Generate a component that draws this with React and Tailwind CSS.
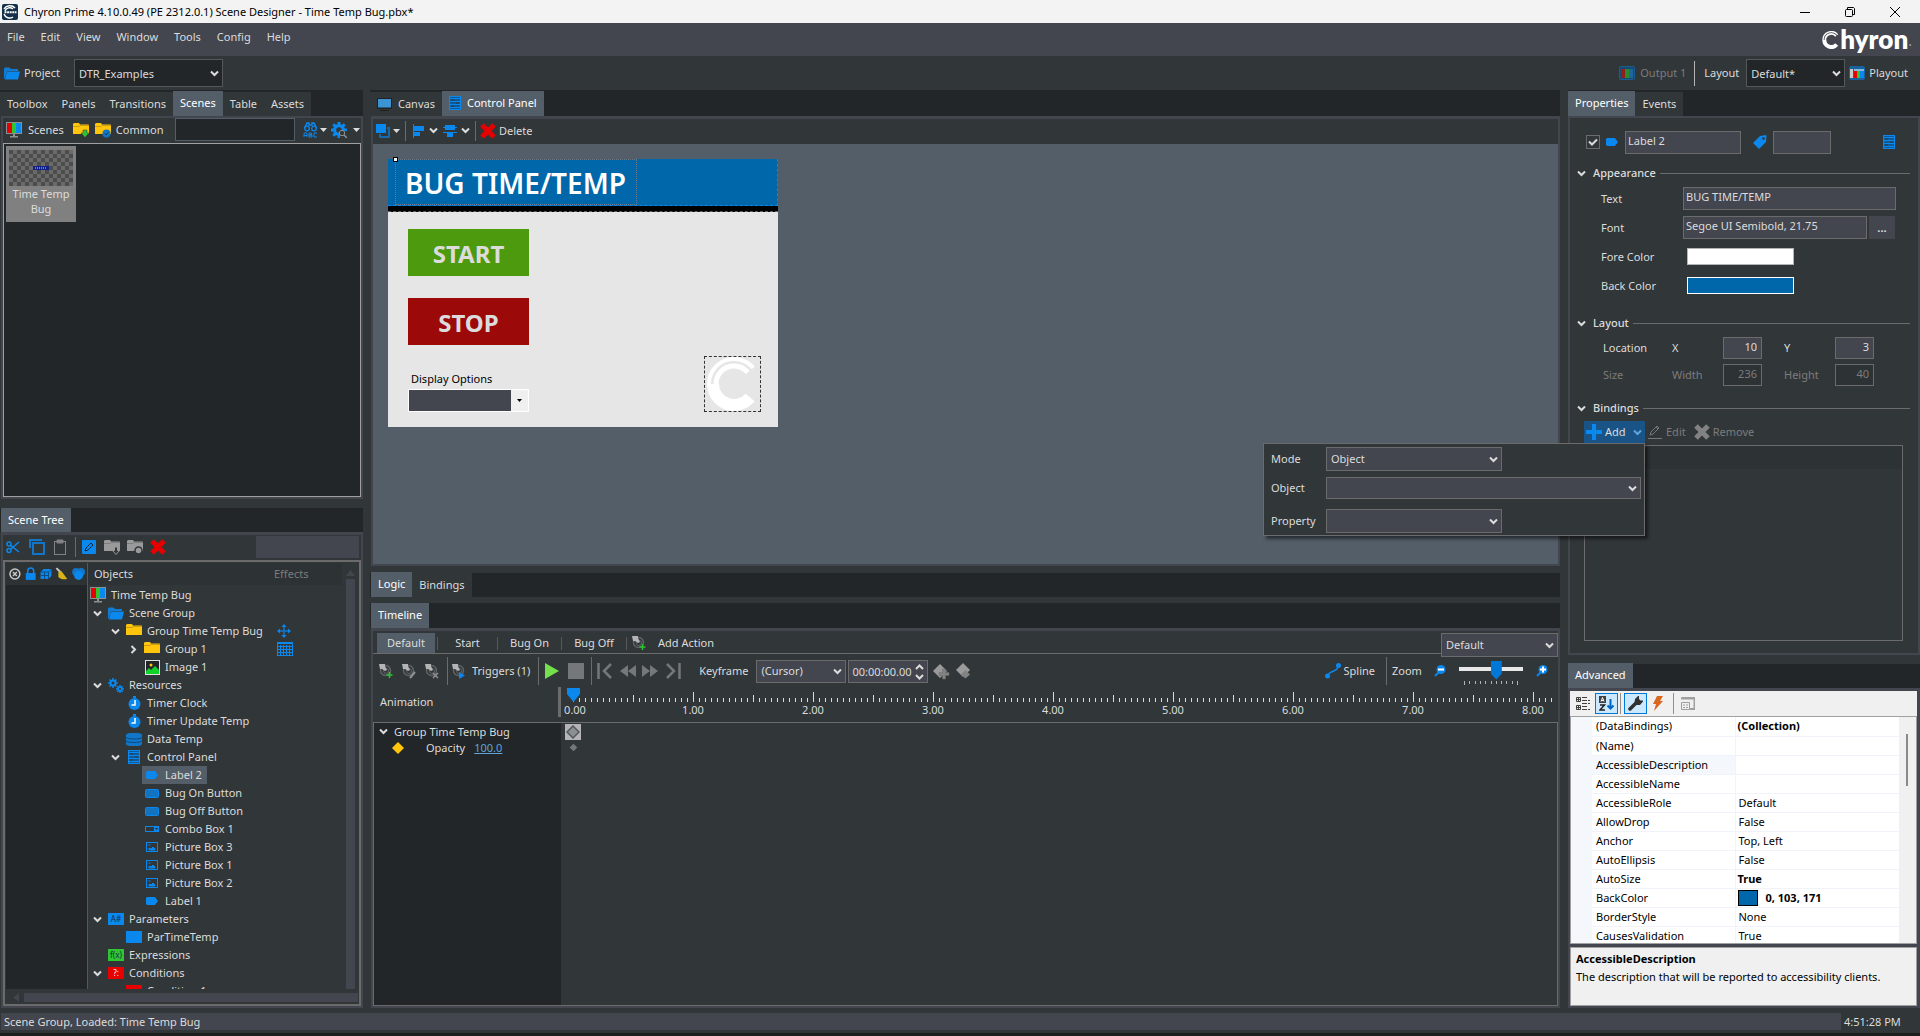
import { useState } from 'react';

const BLUE = '#0a88ee';

/* ---------- icons ---------- */

const Chevron = ({ color = '#dcdcdc', open = true }) => (
  <svg width="9" height="9" viewBox="0 0 9 9" fill="none" stroke={color} strokeWidth="2">
    <path d={open ? 'M1 2.5L4.5 6L8 2.5' : 'M2.5 1L6 4.5L2.5 8'} />
  </svg>
);

const Caret = () => (
  <svg width="7" height="4" viewBox="0 0 7 4"><path d="M0 0h7L3.5 4z" fill="#dcdcdc" /></svg>
);

const AppIcon = () => (
  <svg width="16" height="16" viewBox="0 0 16 16">
    <rect width="16" height="16" rx="2" fill="#12304a" />
    <path d="M2 5a7 7 0 0 1 11-1M3 7a5 5 0 0 1 8-2M2 10a6 6 0 0 0 9 3" fill="none" stroke="#fff" strokeWidth="1.5" />
    <path d="M2.5 8.3h12" stroke="#fff" strokeWidth="2" strokeDasharray="2 .6" />
  </svg>
);

const FolderOpenIcon = () => (
  <svg width="16" height="13" viewBox="0 0 16 13" fill={BLUE}>
    <path d="M0 1.500L1 .5h4.500L7 2h7v2H3L1 11.500H0z" opacity=".85" />
    <path d="M3 4.500h13L14 12.500H1z" />
  </svg>
);

const FolderIcon = ({ color = '#ffc40c', badge }) => (
  <svg width="16" height="16" viewBox="0 0 16 16">
    <path d="M0 2l1-1h5l1 1.500h8.500L16 3v9H0z" fill={color} />
    <path d="M0 4.500h6l1.500-1H16" stroke="#00000030" fill="none" />
    {badge === 'down' && <path d="M10 8h4v3h2l-4 4.500L8 11h2z" fill="#2fc52f" stroke="#313639" strokeWidth=".5" />}
    {badge === 'check' && (
      <>
        <circle cx="11.500" cy="11.500" r="4" fill="#1276c8" />
        <path d="M9.500 11.500l1.500 1.500 2.500-3" stroke="#0c3d66" fill="none" />
      </>
    )}
    {badge === 'arrow' && <path d="M10.500 8h3v3.500h2l-3.500 4-3.500-4h2z" fill="#313639" stroke="#9a9a9a" />}
    {badge === 'dot' && <circle cx="11.500" cy="11.500" r="3.500" fill="#9a9a9a" stroke="#313639" strokeWidth="1.500" />}
  </svg>
);

const MonitorIcon = () => (
  <svg width="16" height="16" viewBox="0 0 16 16">
    <path d="M0 0h16v12h-7v2h3v1.500H4V14h3v-2H0z" fill="#8d9092" />
    <path d="M1 1h5v10H1z" fill="#e60000" />
    <path d="M6 1h4v10H6z" fill="#2fc52f" />
    <path d="M10 1h5v10h-5z" fill={BLUE} />
  </svg>
);

const OutputIcon = () => (
  <svg width="16" height="14" viewBox="0 0 16 14">
    <rect x=".5" y=".5" width="15" height="13" rx="1" fill="#164a75" stroke="#1c5c8f" />
    <path d="M2 3h4v9H2z" fill="#8f1f1f" />
    <path d="M6 3h4v9H6z" fill="#2b8a2b" />
    <path d="M10 3h4v9h-4z" fill="#1f65a0" />
  </svg>
);

const PlayoutIcon = () => (
  <svg width="16" height="14" viewBox="0 0 16 14">
    <rect x=".5" y=".5" width="15" height="13" rx="1" fill="#17639f" stroke="#17639f" />
    <path d="M1 3h3v9H1z" fill="#c8c8c8" />
    <path d="M5 3h10v2H5z" fill="#8ab8da" />
    <path d="M5 5h3v7H5z" fill="#e60000" />
    <path d="M8 5h3v7H8z" fill="#2fc52f" />
    <path d="M11 5h4v7h-4z" fill={BLUE} />
  </svg>
);

const FindIcon = () => (
  <svg width="15" height="16" viewBox="0 0 15 16" fill="none" stroke={BLUE}>
    <path d="M1.500 6L4 1h2v2h3V1h2l2.500 5" strokeWidth="1.500" />
    <circle cx="4" cy="6.500" r="2.300" strokeWidth="1.300" />
    <circle cx="11" cy="6.500" r="2.300" strokeWidth="1.300" />
    <path d="M1 15v-3l1-1.500h1l1 1.500v3M1 13.500h3M6 11h2.500v2H6zM6 13h3v2H6zM14 11h-3v4h3" />
  </svg>
);

const GearIcon = () => (
  <svg width="16" height="16" viewBox="0 0 16 16">
    <circle cx="8" cy="8" r="4.500" fill="none" stroke={BLUE} strokeWidth="3" />
    <path d="M8 0v16M0 8h16M2.300 2.300l11.400 11.400M13.700 2.300L2.300 13.700" stroke={BLUE} strokeWidth="3" />
    <circle cx="8" cy="8" r="2.800" fill="#313639" />
    <path d="M9 9h7v7H9z" fill="#313639" />
    <circle cx="11" cy="11" r="2.700" fill="#313639" stroke="#8d9092" />
    <path d="M13 13l3 3" stroke="#8d9092" strokeWidth="1.500" />
  </svg>
);

const CanvasIcon = () => (
  <svg width="15" height="13" viewBox="0 0 15 13">
    <rect width="15" height="11" rx="1" fill="#1d2123" />
    <rect x="1" y="1" width="13" height="8.500" fill="#3d94d4" />
    <path d="M3 12.500h9" stroke="#1d2123" />
  </svg>
);

const PanelIcon = () => (
  <svg width="12" height="14" viewBox="0 0 12 14" fill="none" stroke={BLUE}>
    <rect x=".5" y=".5" width="11" height="13" fill="#0e5a99" />
    <path d="M0 2.500h12M0 5.500h12M0 8.500h12M0 11.500h12" />
    <path d="M2 4h3M7 7h3M2 10h3" stroke="#313639" />
  </svg>
);

const OrderIcon = () => (
  <svg width="14" height="14" viewBox="0 0 14 14">
    <path d="M0 0h10v9H0z" fill={BLUE} />
    <path d="M4 10v3h9V4h-2" fill="none" stroke="#1669ac" strokeWidth="2" />
  </svg>
);

const AlignLeftIcon = () => (
  <svg width="11" height="14" viewBox="0 0 11 14" fill={BLUE}>
    <path d="M0 0h1v14H0zM1 2h10v5H1zM1 8h6v4H1z" />
  </svg>
);

const AlignMidIcon = () => (
  <svg width="14" height="14" viewBox="0 0 14 14" fill={BLUE}>
    <path d="M2 1h10v5H2zM4 8h6v5H4zM0 3h14v1H0zM0 8h14v1H0z" />
  </svg>
);

const CrossIcon = ({ color = '#e60000' }) => (
  <svg width="16" height="16" viewBox="0 0 16 16">
    <path d="M2 2l12 12M14 2L2 14" stroke={color} strokeWidth="5" />
  </svg>
);

const CutIcon = () => (
  <svg width="14" height="14" viewBox="0 0 14 14" fill="none" stroke={BLUE} strokeWidth="1.500">
    <circle cx="3" cy="4" r="2" />
    <circle cx="3" cy="10.500" r="2" />
    <path d="M4.500 5.300L13 12M4.500 9.300L13 2" />
  </svg>
);

const CopyIcon = () => (
  <svg width="16" height="16" viewBox="0 0 16 16" fill="none" stroke="#1276c8">
    <path d="M1 9V1h12" strokeWidth="2" />
    <rect x="4" y="4" width="11" height="11" strokeWidth="2" />
  </svg>
);

const PasteIcon = () => (
  <svg width="12" height="16" viewBox="0 0 12 16" fill="none" stroke="#828282">
    <rect x=".5" y="2.500" width="11" height="13" />
    <path d="M3 1h6v3H3z" fill="#828282" />
  </svg>
);

const EditBoxIcon = () => (
  <svg width="14" height="14" viewBox="0 0 14 14">
    <rect width="14" height="14" rx="1" fill={BLUE} />
    <path d="M3 11l1-3 5-5 2 2-5 5z" fill="none" stroke="#10273a" />
  </svg>
);

const ClockIcon = () => (
  <svg width="13" height="14" viewBox="0 0 13 14">
    <circle cx="6.500" cy="8" r="6" fill={BLUE} />
    <path d="M5 0h3v2H5z" fill={BLUE} />
    <path d="M7 4v5H3.500" stroke="#fff" strokeWidth="1.500" fill="none" />
  </svg>
);

const DataIcon = () => (
  <svg width="16" height="13" viewBox="0 0 16 13" fill="#1276c8">
    <path d="M0 2c0-3 16-3 16 0v9c0 3-16 3-16 0z" />
    <path d="M0 4.500c2 2 14 2 16 0M0 8c2 2 14 2 16 0" stroke="#0a4a80" fill="none" />
  </svg>
);

const ResourceIcon = () => (
  <svg width="16" height="15" viewBox="0 0 16 15" fill="none" stroke={BLUE}>
    <circle cx="5" cy="5" r="2.500" strokeWidth="2" />
    <path d="M5 0v2M5 8v2M0 5h2M8 5h2M1.500 1.500L3 3M7 7l1.500 1.500M8.500 1.500L7 3M3 7L1.500 8.500" strokeWidth="1.500" />
    <circle cx="12" cy="11" r="1.800" strokeWidth="1.500" />
    <path d="M12 7v2M12 13v2M8 11h2M14 11h2M9.300 8.300l1.200 1.200M13.500 12.500l1.200 1.200M14.700 8.300l-1.200 1.200M10.500 12.500l-1.200 1.200" strokeWidth="1.500" />
  </svg>
);

const LabelIcon = () => (
  <svg width="12" height="8" viewBox="0 0 12 8"><path d="M0 1l1-1h8l3 4-3 4H1L0 7z" fill={BLUE} /></svg>
);

const ButtonIcon = () => (
  <svg width="14" height="9" viewBox="0 0 14 9">
    <rect x=".5" y=".5" width="13" height="8" rx="1" fill="#1273c0" stroke={BLUE} />
  </svg>
);

const ComboIcon = () => (
  <svg width="14" height="6" viewBox="0 0 14 6">
    <rect x=".5" y=".5" width="13" height="5" fill="none" stroke={BLUE} />
    <path d="M9 0h5v6H9z" fill={BLUE} />
    <path d="M10 2h3l-1.500 2z" fill="#222628" />
  </svg>
);

const PictureIcon = () => (
  <svg width="12" height="10" viewBox="0 0 12 10" fill="none" stroke={BLUE}>
    <rect x=".5" y=".5" width="11" height="9" />
    <path d="M3 8V6l2 1 2-2 2 2v1zM2.500 3h2" fill={BLUE} />
  </svg>
);

const ImageIcon = () => (
  <svg width="15" height="15" viewBox="0 0 15 15">
    <rect x=".5" y=".5" width="14" height="14" fill="#222628" stroke="#e0e0e0" />
    <circle cx="6" cy="5" r="1.500" fill="#ffc40c" />
    <path d="M1 14V11l3-3 2 2 4-4 4 4v4z" fill="#12d32a" />
  </svg>
);

const MoveIcon = () => (
  <svg width="14" height="14" viewBox="0 0 14 14">
    <path d="M7 1v12M1 7h12" stroke="#1276c8" strokeWidth="1.500" />
    <path d="M7 0l2.500 3h-5zM7 14l2.500-3h-5zM0 7l3-2.500v5zM14 7l-3-2.500v5z" fill={BLUE} />
  </svg>
);

const GridIcon = () => (
  <svg width="16" height="14" viewBox="0 0 16 14" fill="none" stroke={BLUE}>
    <rect x=".5" y=".5" width="15" height="13" />
    <path d="M0 1.500h16M0 4.500h16M0 7.500h16M0 10.500h16M3.500 3v11M6.500 3v11M9.500 3v11M12.500 3v11" />
  </svg>
);

const Block = ({ color, text = '', fg = '#12304a' }) => (
  <svg width="16" height="12" viewBox="0 0 16 12">
    <rect width="16" height="12" fill={color} />
    <text x="8" y="9" fontSize="8" textAnchor="middle" fill={fg}>{text}</text>
  </svg>
);

// pointer on a clock face, with a small mark in the corner
const ActionIcon = ({ mark }) => (
  <svg width="14" height="15" viewBox="0 0 14 15" fill="none">
    <circle cx="6.500" cy="6.500" r="5" stroke="#606365" strokeWidth="1.500" />
    <circle cx="7" cy="7" r="2.500" stroke="#606365" />
    <path d="M0 0h6v2L8 6 6 7 3 5H1z" fill="#b4b4b4" />
    {mark === 'add' && <path d="M10.500 8v6M7.500 11h6" stroke="#2fc52f" strokeWidth="1.500" />}
    {mark === 'edit' && <path d="M8 14l5-6" stroke="#909090" strokeWidth="2" />}
    {mark === 'del' && <path d="M8 9l5 5M13 9l-5 5" stroke="#909090" strokeWidth="1.500" />}
    {mark === 'run' && <path d="M7 8l6 3.500-6 3.500z" fill={BLUE} />}
  </svg>
);

const PlusIcon = () => (
  <svg width="16" height="16" viewBox="0 0 16 16"><path d="M8 0v16M0 8h16" stroke={BLUE} strokeWidth="4" /></svg>
);

const PencilIcon = () => (
  <svg width="14" height="14" viewBox="0 0 14 14" fill="none" stroke="#777">
    <path d="M2 10l1-3 6-6 2 2-6 6zM8 2l2 2M0 13.500h14" />
  </svg>
);

const TagIcon = () => (
  <svg width="14" height="14" viewBox="0 0 14 14">
    <path d="M0 8L7 1l6-1 .5 1L13 7l-7 7z" fill={BLUE} />
    <circle cx="10.500" cy="3.500" r="1.300" fill="#313639" />
  </svg>
);

const DiamondIcon = ({ size = 14, fill = '#8d9092', stroke = 'none' }) => (
  <svg width={size} height={size} viewBox="0 0 14 14">
    <path d="M7 1l6 6-6 6-6-6z" fill={fill} stroke={stroke} strokeWidth="1.500" />
  </svg>
);

// keyframe diamond with an overlapping plus or a second diamond
const KeyframeIcon = ({ plus = false }) => (
  <svg width={plus ? 17 : 14} height="17" viewBox={plus ? '0 0 17 17' : '0 1 14 17'}>
    <path d="M7 1l7 7-7 7-7-7z" fill="#9a9a9a" />
    {plus
      ? <path d="M9.500 6h3v3.500H16v3h-3.500V16h-3v-3.500H6v-3h3.500z" fill="#828282" stroke="#6b6b6b" strokeWidth=".5" />
      : <path d="M9.500 8l4.500 4.500-4.500 4L5 12.500z" fill="#828282" />}
  </svg>
);

const SplineIcon = () => (
  <svg width="16" height="16" viewBox="0 0 16 16">
    <path d="M3 13c0-6 10-3 10-10" fill="none" stroke={BLUE} strokeWidth="1.500" />
    <circle cx="2.500" cy="13" r="2.500" fill={BLUE} />
    <circle cx="13.500" cy="2.500" r="2.500" fill={BLUE} />
  </svg>
);

const LensIcon = ({ plus = false }) => (
  <svg width="12" height="12" viewBox="0 0 12 12">
    <path d="M1 11l4-4" stroke={BLUE} strokeWidth="2" />
    <circle cx="7" cy="4.500" r="4.500" fill={BLUE} />
    <path d={plus ? 'M4 4.500h6M7 1.500v6' : 'M4 4.500h6'} stroke="#fff" strokeWidth="2" />
  </svg>
);

const StepIcon = ({ d }) => (
  <svg width="17" height="16" viewBox="0 0 17 16" fill="none" stroke="#75787a" strokeWidth="2.500"><path d={d} /></svg>
);

const SkipIcon = ({ d }) => (
  <svg width="16" height="12" viewBox="0 0 16 12" fill="#75787a"><path d={d} /></svg>
);

// the Chyron C: a thick bowl that splits into two bands at the top
const SwooshC = ({ size, className }) => (
  <svg width={size} height={size} viewBox="3 0 54 54" fill="none" stroke="currentColor" className={className}>
    <path d="M47.100 40.500A21 21 0 0 1 10 27" strokeWidth="12" />
    <path d="M6 27.500A25 25 0 0 1 50.200 10.900" strokeWidth="4" />
    <path d="M13 27.500A18 18 0 0 1 44.800 15.400" strokeWidth="5" />
  </svg>
);

/* ---------- shared controls ---------- */

const Sep = ({ tall = false }) => <span className={tall ? 'h-[28px] w-px shrink-0 bg-[#6b6b6b]' : 'h-[20px] w-px shrink-0 bg-[#6b6b6b]'} />;

const Tab = ({ children, active = false, onClick }) => (
  <button
    type="button" onClick={onClick}
    className={active
      ? 'flex h-[25px] items-center gap-[6px] bg-[#535e68] px-[7px] pb-px text-white'
      : 'flex h-[24px] items-center gap-[6px] bg-[#313639] px-[7px]'}
  >
    {children}
  </button>
);

const TabStrip = ({ children }) => (
  <div className="flex h-[26px] shrink-0 items-end bg-[#222628]">{children}</div>
);

const Select = ({ label, options = [], className = '', dark = false }) => (
  <span className={`relative flex items-center ${className}`}>
    <select
      aria-label={label}
      className={dark
        ? 'h-full w-full appearance-none border border-[#55585b] bg-[#222628] px-[4px] pt-px outline-none'
        : 'h-full w-full appearance-none border border-[#6b6b6b] bg-[#43464e] px-[4px] outline-none'}
    >
      {options.map((o) => <option key={o}>{o}</option>)}
    </select>
    <span className="pointer-events-none absolute right-[4px]"><Chevron /></span>
  </span>
);

const inputBase = 'border border-[#6b6b6b] bg-[#43464e] px-[2px] pb-[4px] outline-none';

/* ---------- title, menu and project bars ---------- */

const TitleBar = () => (
  <header className="flex h-[23px] shrink-0 items-center bg-[#f3f3f3] pl-[2px] text-black">
    <AppIcon />
    <h1 className="pl-[6px]">Chyron Prime 4.10.0.49 (PE 2312.0.1) Scene Designer - Time Temp Bug.pbx*</h1>
    <div className="ml-auto flex items-center gap-[35px] pr-[20px]">
      <button type="button" aria-label="Minimize">
        <svg width="10" height="10" viewBox="0 0 10 10"><path d="M0 5.500h10" stroke="#000" /></svg>
      </button>
      <button type="button" aria-label="Restore">
        <svg width="10" height="10" viewBox="0 0 10 10" fill="none" stroke="#000">
          <rect x=".5" y="2.500" width="7" height="7" rx="1" />
          <path d="M2.500 2V.5h6l1 1v6H8" />
        </svg>
      </button>
      <button type="button" aria-label="Close">
        <svg width="10" height="10" viewBox="0 0 10 10"><path d="M0 0l10 10M10 0L0 10" stroke="#000" /></svg>
      </button>
    </div>
  </header>
);

const MenuBar = () => (
  <nav className="flex h-[33px] shrink-0 items-center bg-[#43464e] pl-[7px]">
    <div className="flex gap-[16px] pb-[5px]">
      {['File', 'Edit', 'View', 'Window', 'Tools', 'Config', 'Help'].map((m) => (
        <button key={m} type="button">{m}</button>
      ))}
    </div>
    <div className="ml-auto flex items-center pr-[8px] text-white">
      <SwooshC size={18} />
      <span className="pb-[2px] font-['Lato','Liberation_Sans',sans-serif] text-[26px] font-extrabold leading-[26px]">hyron</span>
      <span className="pt-[2px] text-[14px] text-[#a0a0a0]">.</span>
    </div>
  </nav>
);

const ProjectBar = () => (
  <div className="flex h-[34px] shrink-0 items-center bg-[#313639] pl-[4px] pr-[12px]">
    <button type="button" className="flex items-center gap-[4px]"><FolderOpenIcon /> Project</button>
    <Select dark label="Project" options={['DTR_Examples']} className="ml-[14px] h-[28px] w-[149px]" />
    <button type="button" className="ml-auto flex items-center gap-[5px] text-[#7c7c7c]"><OutputIcon /> Output 1</button>
    <span className="ml-[8px] h-[25px] w-px bg-[#b4b4b4]" />
    <span className="pl-[9px] pr-[7px]">Layout</span>
    <Select dark label="Layout" options={['Default*']} className="h-[28px] w-[99px]" />
    <button type="button" className="ml-[4px] flex items-center gap-[4px]"><PlayoutIcon /> Playout</button>
  </div>
);

/* ---------- left column ---------- */

const ScenesPanel = () => (
  <section className="flex min-h-0 flex-[409] flex-col">
    <TabStrip>
      {['Toolbox', 'Panels', 'Transitions', 'Scenes', 'Table', 'Assets'].map((t) => (
        <Tab key={t} active={t === 'Scenes'}>{t}</Tab>
      ))}
    </TabStrip>
    <div className="ml-px flex min-h-0 flex-1 flex-col border-2 border-[#43464e] bg-[#313639]">
      <div className="flex h-[25px] shrink-0 items-center pb-[2px] pl-[3px] pr-px">
        <button type="button" className="flex items-center gap-[6px]"><MonitorIcon /> Scenes</button>
        <span className="pl-[9px]"><FolderIcon badge="down" /></span>
        <button type="button" className="flex items-center gap-[5px] pl-[6px]"><FolderIcon badge="check" /> Common</button>
        <input aria-label="Search scenes" className="ml-auto h-[23px] w-[120px] border border-[#535e68] bg-[#222628] px-1" />
        <span className="flex items-center gap-[2px] pl-[8px]"><FindIcon /><Caret /></span>
        <span className="pl-[4px]"><GearIcon /></span>
        <span className="pl-[6px]"><Caret /></span>
      </div>
      <div className="min-h-0 flex-1 border border-[#a0a0a0] bg-[#222628] p-[2px]">
        <button type="button" className="flex h-[76px] w-[70px] flex-col items-center bg-[#808080] pt-[4px] leading-[15px]">
          <svg width="64" height="36" viewBox="0 0 64 36">
            <defs>
              <pattern id="checker" width="8" height="8" patternUnits="userSpaceOnUse">
                <path d="M0 0h8v8H0z" fill="#6a6a6a" />
                <path d="M0 0h4v4H0zM4 4h4v4H4z" fill="#4c4c4c" />
              </pattern>
            </defs>
            <rect width="64" height="36" fill="url(#checker)" />
            <rect x="24" y="16" width="16" height="4" fill="#12208a" />
            <path d="M26 18h12" stroke="#cfd4f5" strokeDasharray="1 1" />
          </svg>
          Time Temp<br />Bug
        </button>
      </div>
    </div>
  </section>
);

const TREE = [
  { name: 'Time Temp Bug', level: 0, icon: <MonitorIcon /> },
  { name: 'Scene Group', level: 1, icon: <FolderOpenIcon />, open: true },
  { name: 'Group Time Temp Bug', level: 2, icon: <FolderIcon />, open: true, effect: <MoveIcon /> },
  { name: 'Group 1', level: 3, icon: <FolderIcon />, open: false, effect: <GridIcon /> },
  { name: 'Image 1', level: 3, icon: <ImageIcon /> },
  { name: 'Resources', level: 1, icon: <ResourceIcon />, open: true },
  { name: 'Timer Clock', level: 2, icon: <ClockIcon /> },
  { name: 'Timer Update Temp', level: 2, icon: <ClockIcon /> },
  { name: 'Data Temp', level: 2, icon: <DataIcon /> },
  { name: 'Control Panel', level: 2, icon: <PanelIcon />, open: true },
  { name: 'Label 2', level: 3, icon: <LabelIcon />, selected: true },
  { name: 'Bug On Button', level: 3, icon: <ButtonIcon /> },
  { name: 'Bug Off Button', level: 3, icon: <ButtonIcon /> },
  { name: 'Combo Box 1', level: 3, icon: <ComboIcon /> },
  { name: 'Picture Box 3', level: 3, icon: <PictureIcon /> },
  { name: 'Picture Box 1', level: 3, icon: <PictureIcon /> },
  { name: 'Picture Box 2', level: 3, icon: <PictureIcon /> },
  { name: 'Label 1', level: 3, icon: <LabelIcon /> },
  { name: 'Parameters', level: 1, icon: <Block color={BLUE} text="A#" />, open: true },
  { name: 'ParTimeTemp', level: 2, icon: <Block color={BLUE} /> },
  { name: 'Expressions', level: 1, icon: <Block color="#2fc52f" text="f(x)" /> },
  { name: 'Conditions', level: 1, icon: <Block color="#e60000" text="?:" fg="#fff" />, open: true },
  { name: 'Condition 1', level: 2, icon: <Block color="#e60000" /> },
];

const TreeRow = ({ item }) => (
  <li className="flex h-[18px] items-center" style={{ paddingLeft: Math.max(0, item.level - 1) * 18 }}>
    {item.level > 0 && (
      <span className="flex w-[18px] justify-center">
        {item.open !== undefined && <Chevron open={item.open} />}
      </span>
    )}
    <span className={item.selected
      ? 'flex h-full items-center gap-[5px] bg-[#535e68] pl-[2px] pr-[5px]'
      : 'flex h-full items-center gap-[5px] pl-[2px] pr-[5px]'}
    >
      <span className="flex w-[16px] justify-center">{item.icon}</span>
      {item.name}
    </span>
    <span className="ml-auto w-[65px]">{item.effect}</span>
  </li>
);

const TreeHeaderIcons = () => (
  <svg width="80" height="16" viewBox="0 0 80 16">
    <circle cx="7" cy="8" r="5" fill="none" stroke="#c8c8c8" strokeWidth="1.500" />
    <path d="M5 6l4 4M9 6l-4 4" stroke="#c8c8c8" strokeWidth="1.500" />
    <path d="M18 7h10v7H18z" fill={BLUE} />
    <path d="M20 8V5a3 3 0 0 1 6 0v3" fill="none" stroke={BLUE} strokeWidth="1.500" />
    <path d="M33 6l3-3h8v7l-3 3h-8z" fill={BLUE} />
    <path d="M33 6h8v7M41 6l3-3M37 6v7M33 9.500h8" stroke="#0b4d85" fill="none" />
    <path d="M49 2l4 4" stroke="#c8c8c8" strokeWidth="2" />
    <path d="M51 6l3-1 6 8c-4 1-7 0-9-2z" fill="#d8b418" />
    <circle cx="69" cy="6" r="4" fill="#1276c8" />
    <circle cx="74" cy="6" r="4" fill="#1276c8" />
    <circle cx="71.500" cy="9.500" r="4.500" fill={BLUE} />
  </svg>
);

const SceneTreePanel = () => (
  <section className="flex min-h-0 flex-[500] flex-col">
    <div className="flex h-[24px] shrink-0 bg-[#222628] pl-px">
      <Tab active>Scene Tree</Tab>
    </div>
    <div className="ml-px flex min-h-0 flex-1 flex-col border-2 border-t-[3px] border-[#43464e] bg-[#313639]">
      <div className="flex h-[25px] shrink-0 items-center pb-[2px] pl-[3px]">
        <CutIcon />
        <span className="pl-[9px]"><CopyIcon /></span>
        <span className="pl-[9px] pr-[9px]"><PasteIcon /></span>
        <Sep />
        <span className="pl-[6px]"><EditBoxIcon /></span>
        <span className="pl-[8px]"><FolderIcon color="#9a9a9a" badge="arrow" /></span>
        <span className="pl-[7px]"><FolderIcon color="#9a9a9a" badge="dot" /></span>
        <span className="pl-[7px]"><CrossIcon /></span>
        <input aria-label="Search tree" className="ml-auto mr-[2px] h-[22px] w-[103px] bg-[#43464e] px-1" />
      </div>
      <div className="flex min-h-0 flex-1 flex-col border-2 border-[#6b6b6b] p-px">
        <div className="flex min-h-0 flex-1">
          <div className="flex w-[82px] flex-col border-r border-[#55585b] bg-[#222628]">
            <div className="flex h-[22px] items-center bg-[#2d3234] pl-[2px]"><TreeHeaderIcons /></div>
          </div>
          <div className="flex min-w-0 flex-1 flex-col">
            <div className="flex h-[22px] shrink-0 items-center bg-[#2d3234] pl-[6px]">
              <span>Objects</span>
              <span className="ml-auto w-[68px] text-[#7c7c7c]">Effects</span>
            </div>
            <ul className="min-h-0 flex-1 overflow-hidden pt-px">
              {TREE.map((item) => <TreeRow key={item.name} item={item} />)}
            </ul>
          </div>
          <div className="flex w-[16px] flex-col items-center gap-[3px] pt-[7px]">
            <svg width="9" height="6" viewBox="0 0 9 6"><path d="M0 6h9L4.500 0z" fill="#43464e" /></svg>
            <div className="w-[9px] flex-1 bg-[#43464e]" />
          </div>
        </div>
        <div className="flex h-[14px] shrink-0 items-end gap-[5px] pb-px pl-[7px]">
          <svg width="6" height="9" viewBox="0 0 6 9"><path d="M6 0v9L0 4.500z" fill="#43464e" /></svg>
          <div className="h-[9px] flex-1 bg-[#43464e]" />
        </div>
      </div>
    </div>
  </section>
);

/* ---------- centre column ---------- */

const DesignForm = () => (
  <div className="w-[390px] bg-[#e6e6e6] text-black">
    <div className="flex h-[47px] border-b border-r border-dashed border-[#0a88ee] bg-[#0067ab] pl-[7px]">
      <div className="relative flex h-[46px] w-[242px] items-center border border-dotted border-[#6b7a86] pl-[9px] pt-[2px] text-[28px] font-semibold leading-none text-white">
        <span className="absolute -left-[3px] -top-[3px] h-[5px] w-[5px] border border-black bg-white" />
        BUG TIME/TEMP
      </div>
    </div>
    <div className="h-[6px] border-b border-dashed border-[#606060] bg-black" />
    <div className="flex items-end justify-between pb-[15px] pl-[20px] pr-[17px] pt-[17px]">
      <div className="flex w-[121px] flex-col">
        <button type="button" className="h-[47px] bg-[#4e9a0e] pt-[2px] text-[24px] font-bold text-[#dcdcdc]">START</button>
        <button type="button" className="mt-[22px] h-[47px] bg-[#9c0909] pt-[2px] text-[24px] font-bold text-[#dcdcdc]">STOP</button>
        <label htmlFor="display-options" className="pb-[2px] pl-[3px] pt-[26px] leading-[16px]">Display Options</label>
        <span className="relative flex">
          <select id="display-options" className="h-[23px] w-full appearance-none border border-white bg-[#43464e]" />
          <span className="pointer-events-none absolute inset-y-px right-px flex w-[17px] items-center justify-center bg-[#f0f0f0]">
            <svg width="5" height="3" viewBox="0 0 5 3"><path d="M0 0h5L2.500 3z" fill="#000" /></svg>
          </span>
        </span>
      </div>
      <div className="flex h-[56px] w-[57px] items-center justify-center border border-dashed border-[#333]">
        <SwooshC size={54} className="text-white" />
      </div>
    </div>
  </div>
);

const CanvasPanel = () => (
  <section className="flex min-h-0 flex-[476] flex-col">
    <TabStrip>
      <Tab><CanvasIcon /> Canvas</Tab>
      <Tab active><PanelIcon /> Control Panel</Tab>
    </TabStrip>
    <div className="ml-px flex min-h-0 flex-1 flex-col border-2 border-t-[3px] border-[#43464e] bg-[#535e68]">
      <div className="flex h-[25px] shrink-0 items-center bg-[#313639] pb-[2px] pl-[3px]">
        <OrderIcon />
        <span className="pl-[3px] pr-[5px]"><Caret /></span>
        <Sep />
        <span className="flex items-center gap-[5px] pl-[7px]"><AlignLeftIcon /><Chevron /></span>
        <span className="flex items-center gap-[4px] pl-[5px] pr-[5px]"><AlignMidIcon /><Chevron /></span>
        <Sep />
        <button type="button" className="flex items-center gap-[3px] pl-[4px]"><CrossIcon /> Delete</button>
      </div>
      <div className="pl-[15px] pt-[15px]"><DesignForm /></div>
    </div>
  </section>
);

// 6px for each twentieth of a second
const Ruler = () => (
  <svg width="100%" height="36" className="block">
    {Array.from({ length: 164 }, (_, i) => {
      const h = i % 20 === 0 ? 10 : i % 10 === 0 ? 7 : 4;
      return <rect key={i} x={12 + i * 6} y={16 - h} width="1" height={h} fill="#dcdcdc" />;
    })}
    {Array.from({ length: 9 }, (_, s) => (
      <text key={s} x={s === 0 ? 14 : 12 + s * 120} y="28" textAnchor="middle" fill="#dcdcdc">{s}.00</text>
    ))}
    <path d="M6 2h13v6l-6.500 8L6 8z" fill={BLUE} />
  </svg>
);

const ACTIONS = [
  { name: 'Default', size: 'w-[58px] bg-[#535e68] mr-[2px]' },
  { name: 'Start', size: 'w-[59px]' },
  { name: 'Bug On', size: 'w-[63px]' },
  { name: 'Bug Off', size: 'w-[64px]' },
];

const TimelinePanel = () => {
  const [zoom, setZoom] = useState(6);

  return (
    <section className="flex min-h-0 flex-[435] flex-col">
      <div className="flex h-[24px] shrink-0 items-end bg-[#222628] pl-px">
        <Tab active>Logic</Tab>
        <Tab>Bindings</Tab>
      </div>
      <div className="mt-[6px] flex h-[25px] shrink-0 items-end bg-[#222628] pl-px">
        <Tab active>Timeline</Tab>
      </div>
      <div className="ml-px flex min-h-0 flex-1 flex-col border-2 border-t-[3px] border-[#43464e] bg-[#313639]">
        <div className="flex h-[23px] shrink-0 items-center border-b border-[#6b6b6b] pl-[4px] pt-[2px]">
          {ACTIONS.map((a) => (
            <span key={a.name} className="flex items-center">
              <button type="button" className={`h-[20px] ${a.size}`}>{a.name}</button>
              <span className="h-[13px] w-px bg-[#55585b]" />
            </span>
          ))}
          <button type="button" className="flex items-center gap-[12px] pl-[5px]"><ActionIcon mark="add" /> Add Action</button>
          <Select label="Action" options={['Default']} className="ml-auto h-[24px] w-[117px] self-start" />
        </div>
        <div className="flex h-[32px] shrink-0 items-center pl-[6px] pt-[2px]">
          <ActionIcon mark="add" />
          <span className="pl-[9px]"><ActionIcon mark="edit" /></span>
          <span className="pl-[9px] pr-[8px]"><ActionIcon mark="del" /></span>
          <Sep tall />
          <button type="button" className="flex items-center gap-[6px] pl-[4px] pr-[8px]"><ActionIcon mark="run" /> Triggers (1)</button>
          <Sep tall />
          <button type="button" aria-label="Play" className="pl-[6px]">
            <svg width="14" height="16" viewBox="0 0 14 16"><path d="M0 0l14 8-14 8z" fill="#74e04c" /></svg>
          </button>
          <button type="button" aria-label="Stop" className="ml-[9px] mr-[7px] h-[16px] w-[16px] bg-[#75787a]" />
          <Sep tall />
          <span className="flex items-center gap-[6px] pl-[5px]">
            <StepIcon d="M1.500 0v16M14 1L7 8l7 7" />
            <SkipIcon d="M8 0v12L0 6zM16 0v12L8 6z" />
            <SkipIcon d="M0 0v12l8-6zM8 0v12l8-6z" />
            <StepIcon d="M3 1l7 7-7 7M15.500 0v16" />
          </span>
          <span className="pl-[18px] pr-[8px]">Keyframe</span>
          <Select label="Keyframe" options={['(Cursor)']} className="h-[23px] w-[90px]" />
          <span className="relative ml-[2px] flex h-[23px] w-[80px]">
            <input aria-label="Time" defaultValue="00:00:00.00" className="h-full w-full border border-[#6b6b6b] bg-[#43464e] px-[3px]" />
            <svg width="9" height="16" viewBox="0 0 9 16" fill="none" stroke="#dcdcdc" strokeWidth="2" className="absolute right-[4px] top-[4px]">
              <path d="M1 5l3.500-3.500L8 5M1 11l3.500 3.500L8 11" />
            </svg>
          </span>
          <span className="flex items-center gap-[6px] pl-[5px]"><KeyframeIcon plus /><KeyframeIcon /></span>
          <button type="button" className="ml-auto flex items-center gap-[3px] pr-[11px]"><SplineIcon /> Spline</button>
          <Sep tall />
          <label htmlFor="zoom" className="w-[47px] pl-[5px]">Zoom</label>
          <LensIcon />
          <span className="mx-[13px] flex w-[64px] flex-col pt-[4px]">
            <input
              id="zoom" type="range" min="0" max="10" value={zoom}
              onChange={(e) => setZoom(Number(e.target.value))}
              className="h-[19px] w-full appearance-none bg-[linear-gradient(#e8e8e8,#e8e8e8)] bg-[length:100%_4px] bg-[position:0_6px] bg-no-repeat [&::-webkit-slider-thumb]:h-[19px] [&::-webkit-slider-thumb]:w-[11px] [&::-webkit-slider-thumb]:appearance-none [&::-webkit-slider-thumb]:bg-[#0078d7] [&::-webkit-slider-thumb]:[clip-path:polygon(0_0,100%_0,100%_70%,50%_100%,0_70%)]"
            />
            <svg width="64" height="6" viewBox="0 0 64 6">
              {Array.from({ length: 11 }, (_, i) => (
                <rect key={i} x={5 + Math.round(i * 5.3)} y="1" width="1" height={i % 10 ? 3 : 4} fill="#b4b4b4" />
              ))}
            </svg>
          </span>
          <span className="pr-[10px]"><LensIcon plus /></span>
        </div>
        <div className="flex h-[36px] shrink-0 items-center">
          <div className="flex w-[188px] shrink-0 items-center justify-between pb-[4px] pl-[7px]">
            Animation
            <span className="h-[30px] w-[3px] bg-[#6b6b6b]" />
          </div>
          <div className="min-w-0 flex-1"><Ruler /></div>
        </div>
        <div className="flex min-h-0 flex-1 border border-[#6b6b6b]">
          <div className="w-[187px] bg-[#222628] pl-[5px]">
            <div className="flex h-[17px] items-center gap-[6px]"><Chevron /> Group Time Temp Bug</div>
            <div className="flex h-[16px] items-center pl-[12px]">
              <DiamondIcon size={14} fill="#ffc40c" />
              <span className="pl-[21px] pr-[9px]">Opacity</span>
              <a href="#opacity" className="text-[#5da5dc] underline">100.0</a>
            </div>
          </div>
          <div className="flex w-[24px] flex-col items-center gap-[3px]">
            <span className="mt-px bg-[#b4b4b4] p-px"><DiamondIcon fill="#8d9092" stroke="#55585b" /></span>
            <DiamondIcon size={9} fill="#75787a" />
          </div>
        </div>
      </div>
    </section>
  );
};

/* ---------- right column ---------- */

const SectionTitle = ({ children }) => (
  <div className="flex h-[16px] shrink-0 items-center pl-[7px] pr-[8px]">
    <Chevron />
    <h2 className="pl-[7px] pr-[4px] font-medium">{children}</h2>
    <span className="h-px flex-1 bg-[#6b6b6b]" />
  </div>
);

const Field = ({ id, label, value, muted = false, className = '' }) => (
  <>
    <label htmlFor={id} className={muted ? 'w-[51px] text-[#7c7c7c]' : 'w-[51px]'}>{label}</label>
    <input
      id={id} defaultValue={value} disabled={muted}
      className={muted
        ? `h-[22px] w-[39px] border border-[#6b6b6b] bg-[#2d3234] px-[4px] pb-[3px] text-right text-[#7c7c7c] ${className}`
        : `h-[22px] w-[39px] border border-[#6b6b6b] bg-[#43464e] px-[4px] pb-[3px] text-right ${className}`}
    />
  </>
);

const BindingMenu = () => (
  <div className="absolute right-0 top-full z-10 w-[382px] border border-[#6b6b6b] bg-[#313639] pb-[2px] pl-[7px] pr-[3px] pt-[3px] text-left shadow-[3px_3px_3px_rgba(0,0,0,0.5)]">
    <div className="flex items-center"><span className="w-[55px]">Mode</span><Select label="Mode" options={['Object']} className="h-[24px] w-[176px]" /></div>
    <div className="mt-[6px] flex items-center"><span className="w-[55px]">Object</span><Select label="Object" className="h-[22px] w-[315px]" /></div>
    <div className="mt-[10px] flex items-center"><span className="w-[55px]">Property</span><Select label="Property" className="h-[24px] w-[176px]" /></div>
  </div>
);

const PropertiesPanel = () => (
  <section className="flex min-h-0 flex-[565] flex-col">
    <TabStrip>
      <Tab active>Properties</Tab>
      <Tab>Events</Tab>
    </TabStrip>
    <div className="flex min-h-0 flex-1 flex-col border-2 border-[#43464e] bg-[#313639]">
      <div className="flex h-[47px] shrink-0 items-center pl-[16px] pr-[23px] pt-px">
        <span className="relative flex">
          <input type="checkbox" defaultChecked aria-label="Enabled" className="h-[14px] w-[14px] appearance-none border border-[#6b6b6b]" />
          <svg width="14" height="14" viewBox="0 0 14 14" fill="none" stroke="#dcdcdc" strokeWidth="2" className="pointer-events-none absolute inset-0">
            <path d="M3 6.500L6 9.500L11 4.500" />
          </svg>
        </span>
        <span className="pl-[6px]"><LabelIcon /></span>
        <input aria-label="Name" defaultValue="Label 2" className={`ml-[7px] h-[23px] w-[116px] ${inputBase}`} />
        <span className="pl-[12px]"><TagIcon /></span>
        <input aria-label="Tag" className={`ml-[6px] h-[23px] w-[58px] ${inputBase}`} />
        <span className="ml-auto"><PanelIcon /></span>
      </div>

      <SectionTitle>Appearance</SectionTitle>
      <div className="flex flex-col pb-[15px] pl-[31px] pt-[3px]">
        <div className="flex h-[29px] items-center">
          <label htmlFor="prop-text" className="w-[82px]">Text</label>
          <input id="prop-text" defaultValue="BUG TIME/TEMP" className={`h-[23px] w-[213px] ${inputBase}`} />
        </div>
        <div className="flex h-[29px] items-center">
          <label htmlFor="prop-font" className="w-[82px]">Font</label>
          <input id="prop-font" defaultValue="Segoe UI Semibold, 21.75" className={`h-[23px] w-[184px] ${inputBase}`} />
          <button type="button" className="ml-[2px] h-[23px] w-[26px] bg-[#43464e] font-bold">...</button>
        </div>
        <div className="flex h-[29px] items-center">
          <span className="w-[86px]">Fore Color</span>
          <button type="button" aria-label="Fore color" className="h-[17px] w-[107px] border border-[#b4b4b4] bg-white" />
        </div>
        <div className="flex h-[29px] items-center">
          <span className="w-[86px]">Back Color</span>
          <button type="button" aria-label="Back color" className="h-[17px] w-[107px] border border-white bg-[#0067ab]" />
        </div>
      </div>

      <SectionTitle>Layout</SectionTitle>
      <div className="flex flex-col gap-[5px] pb-[14px] pl-[33px] pt-[6px]">
        <div className="flex items-center">
          <span className="w-[69px]">Location</span>
          <Field id="loc-x" label="X" value="10" className="mr-[22px]" />
          <Field id="loc-y" label="Y" value="3" />
        </div>
        <div className="flex items-center">
          <span className="w-[69px] text-[#7c7c7c]">Size</span>
          <Field id="size-w" label="Width" value="236" muted className="mr-[22px]" />
          <Field id="size-h" label="Height" value="40" muted />
        </div>
      </div>

      <SectionTitle>Bindings</SectionTitle>
      <div className="flex items-center pl-[14px] pt-[5px] text-[#7c7c7c]">
        <div className="relative text-[#dcdcdc]">
          <button type="button" className="flex h-[22px] w-[61px] items-center bg-[#1a5487] pl-[2px]">
            <PlusIcon /><span className="pl-[3px] pr-[7px]">Add</span><Chevron color="#5da5dc" />
          </button>
          <BindingMenu />
        </div>
        <button type="button" className="flex items-center gap-[4px] pl-[3px]"><PencilIcon /> Edit</button>
        <button type="button" className="flex items-center gap-[3px] pl-[8px]"><CrossIcon color="#828282" /> Remove</button>
      </div>
      <div className="mb-[12px] ml-[14px] mr-[15px] mt-[2px] min-h-0 flex-1 border border-[#6b6b6b]">
        <div className="h-[23px] bg-[#2d3234]" />
      </div>
    </div>
  </section>
);

const PROPS = [
  ['(DataBindings)', '(Collection)', true],
  ['(Name)', ''],
  ['AccessibleDescription', ''],
  ['AccessibleName', ''],
  ['AccessibleRole', 'Default'],
  ['AllowDrop', 'False'],
  ['Anchor', 'Top, Left'],
  ['AutoEllipsis', 'False'],
  ['AutoSize', 'True', true],
  ['BackColor', '0, 103, 171', true],
  ['BorderStyle', 'None'],
  ['CausesValidation', 'True'],
];

const AdvancedPanel = () => (
  <section className="flex min-h-0 flex-[344] flex-col">
    <div className="flex h-[24px] shrink-0 items-end bg-[#222628]"><Tab active>Advanced</Tab></div>
    <div className="flex min-h-0 flex-1 flex-col border-x-2 border-b-2 border-t-[3px] border-r-[3px] border-[#43464e] bg-[#43464e] text-black">
      <div className="flex h-[25px] shrink-0 items-center bg-[#f0f0f0] pl-[6px]">
        <svg width="14" height="16" viewBox="0 0 14 16" fill="none" stroke="#404040">
          <path d="M.5 1.500h4v4h-4zM.5 9.500h4v4h-4zM1 3.500h3M1 11.500h3M2.500 2v3M2.500 10v3" />
          <path d="M6 1.500h5M6 4.500h8M6 7.500h8M6 10.500h5M6 13.500h8" strokeDasharray="5 1" />
        </svg>
        <button type="button" aria-label="Alphabetical" className="ml-[5px] flex h-[21px] w-[23px] items-center justify-center border border-[#0078d7] bg-[#cce8ff]">
          <svg width="15" height="15" viewBox="0 0 15 15">
            <path d="M0 0h7v7H0z" fill="#404040" />
            <path d="M2 5.500l1.500-4 1.500 4M2.500 4.500h2" stroke="#fff" fill="none" />
            <path d="M1 9h4.500L1 14h5" stroke="#202020" strokeWidth="1.500" fill="none" />
            <path d="M11.500 3v9M8.500 9.500l3 3 3-3" stroke="#0067c0" strokeWidth="2" fill="none" />
          </svg>
        </button>
        <span className="ml-[2px] mr-[3px] h-[21px] w-px bg-[#909090]" />
        <button type="button" aria-label="Properties" className="flex h-[21px] w-[23px] items-center justify-center border border-[#0078d7] bg-[#cce8ff]">
          <svg width="15" height="15" viewBox="0 0 15 15">
            <path d="M2 13l6-6" stroke="#303030" strokeWidth="3.500" strokeLinecap="round" />
            <path d="M7 3l3-3h1v3l1.500 1.500H15v1l-3 3.500H8L6.500 7z" fill="#303030" />
          </svg>
        </button>
        <svg width="12" height="15" viewBox="0 0 12 15" className="ml-[5px]">
          <path d="M5 0h6L8 5h3L2 15l2-7H1z" fill="#d9671e" />
        </svg>
        <span className="ml-[9px] mr-[7px] h-[21px] w-px bg-[#909090]" />
        <svg width="14" height="13" viewBox="0 0 14 13" fill="none" stroke="#a0a0a0">
          <path d="M.5 1h13v11H9M0 1.500h14" strokeWidth="2" />
          <path d="M.5 5.500h8v7h-8zM2 8h2M5 8h2M2 10.500h2M5 10.500h2" />
        </svg>
      </div>
      <div className="flex min-h-0 flex-1 overflow-hidden border border-[#a0a0a0] bg-white">
        <div className="w-[21px] shrink-0 bg-[#f4f7fc]" />
        <div className="min-w-0 flex-1 overflow-hidden">
          <table className="w-full table-fixed border-collapse">
            <tbody>
              {PROPS.map(([name, value, bold]) => (
                <tr key={name} className="h-[19px] border-b border-[#f0f3fa]">
                  <th
                    scope="row"
                    className={name === 'AccessibleDescription'
                      ? 'w-[143px] border-r border-[#f0f3fa] bg-[#f4f7fc] py-0 pl-[4px] text-left font-normal leading-[18px]'
                      : 'w-[143px] border-r border-[#f0f3fa] py-0 pl-[4px] text-left font-normal leading-[18px]'}
                  >
                    {name}
                  </th>
                  <td className={bold ? 'py-0 pl-[2px] font-bold leading-[18px]' : 'py-0 pl-[3px] leading-[18px]'}>
                    {name === 'BackColor' ? (
                      <span className="flex items-center gap-[8px]">
                        <span className="h-[16px] w-[20px] border border-black bg-[#0067ab]" />{value}
                      </span>
                    ) : value}
                  </td>
                </tr>
              ))}
            </tbody>
          </table>
        </div>
        <div className="w-[17px] shrink-0 bg-[#f0f0f0] pl-[7px] pt-[17px]">
          <div className="h-[52px] w-[2px] bg-[#8a8a8a]" />
        </div>
      </div>
      <div className="mt-[3px] h-[59px] shrink-0 border border-[#a0a0a0] bg-[#f0f0f0] px-[5px] pt-[2px] leading-[18px]">
        <h3 className="font-bold">AccessibleDescription</h3>
        <p>The description that will be reported to accessibility clients.</p>
      </div>
    </div>
  </section>
);

const App = () => (
  <div className="flex h-screen min-h-[900px] flex-col overflow-hidden bg-[#313639] font-['Noto_Sans','Open_Sans',sans-serif] text-[11px] leading-[16px] text-[#dcdcdc]">
    <TitleBar />
    <MenuBar />
    <ProjectBar />
    <main className="flex min-h-0 flex-1">
      <div className="flex w-[363px] shrink-0 flex-col gap-[9px]">
        <ScenesPanel />
        <SceneTreePanel />
      </div>
      <div className="ml-[7px] flex min-w-0 flex-1 flex-col gap-[7px]">
        <CanvasPanel />
        <TimelinePanel />
      </div>
      <div className="ml-[8px] flex w-[352px] shrink-0 flex-col gap-[9px]">
        <PropertiesPanel />
        <AdvancedPanel />
      </div>
    </main>
    <footer className="mt-[5px] flex h-[17px] shrink-0 items-center pl-px">
      <span className="flex h-full flex-1 items-center bg-[#43464e] pl-[3px]">Scene Group, Loaded: Time Temp Bug</span>
      <span className="w-[79px] pl-[3px]">4:51:28 PM</span>
    </footer>
    <div className="mt-[3px] h-[3px] shrink-0 bg-[#1e1e1e]" />
  </div>
);

export default App;
